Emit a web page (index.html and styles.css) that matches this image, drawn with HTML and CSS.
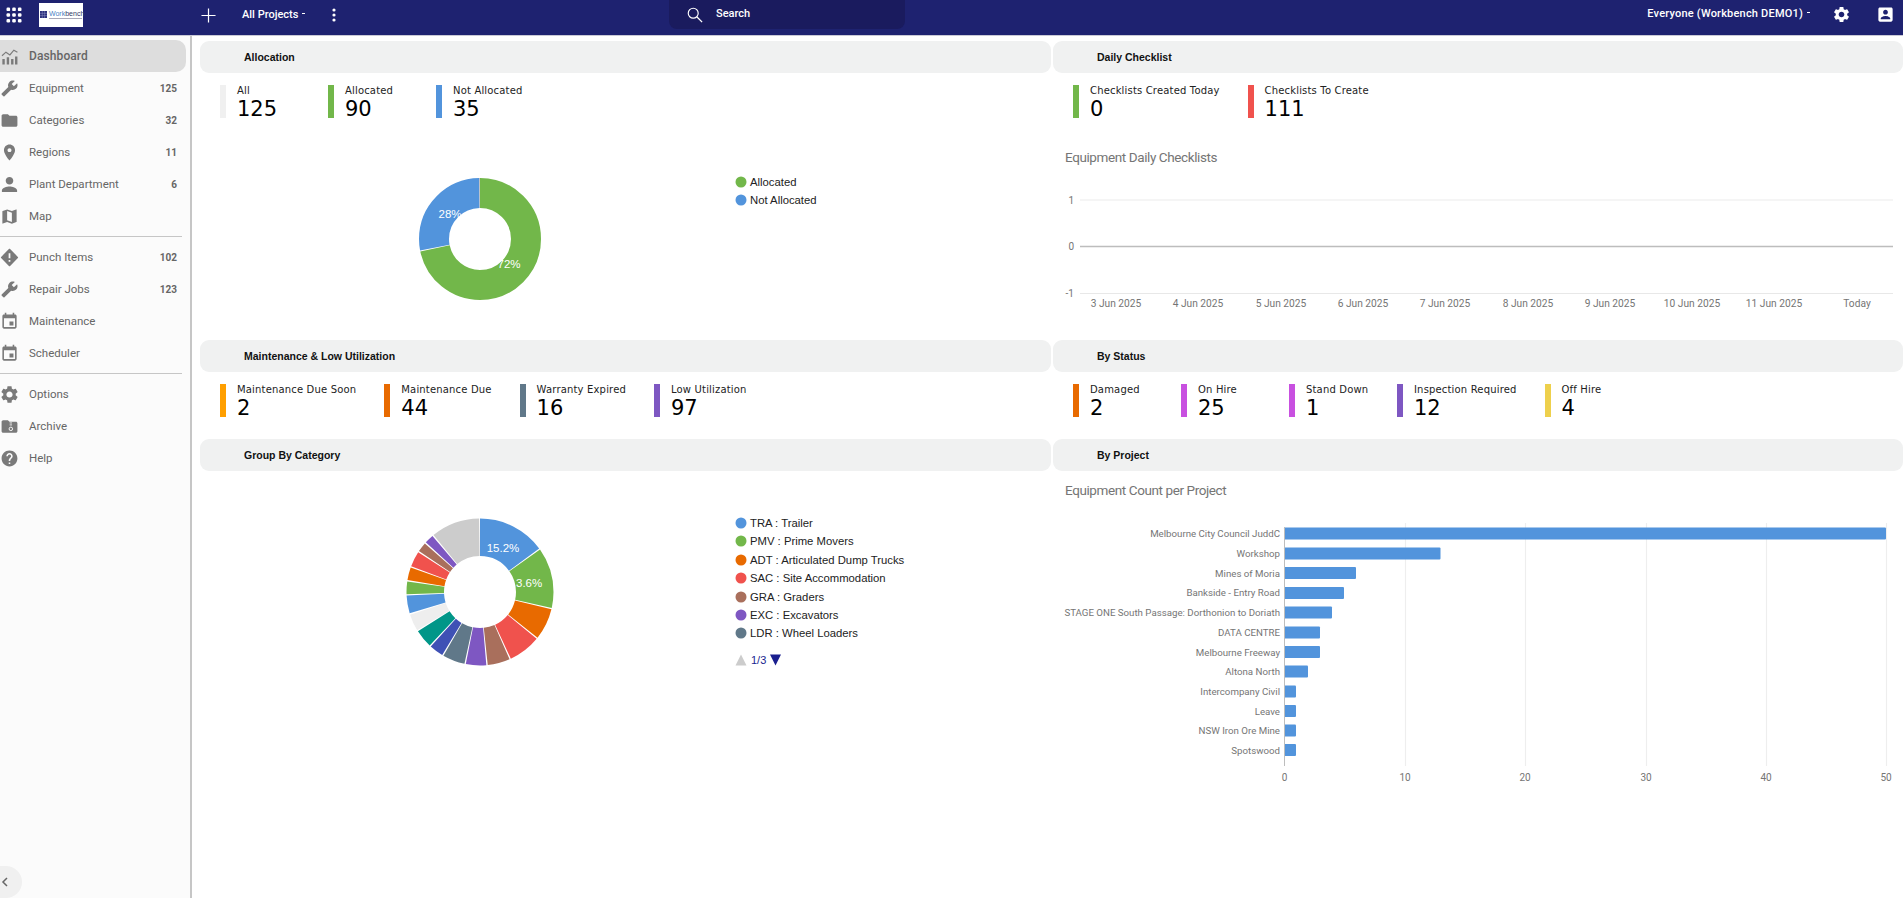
FILE: index.html
```html
<!DOCTYPE html>
<html lang="en">
<head>
<meta charset="utf-8">
<title>Workbench Dashboard</title>
<link rel="stylesheet" href="styles.css">
</head>
<body>
<header class="topbar">
  <div class="top-left">
    <svg class="apps" viewBox="0 0 16 16" fill="#fff"><rect x="0.5" y="0.5" width="3.6" height="3.6" rx="1.2"/><rect x="6.2" y="0.5" width="3.6" height="3.6" rx="1.2"/><rect x="11.9" y="0.5" width="3.6" height="3.6" rx="1.2"/><rect x="0.5" y="6.2" width="3.6" height="3.6" rx="1.2"/><rect x="6.2" y="6.2" width="3.6" height="3.6" rx="1.2"/><rect x="11.9" y="6.2" width="3.6" height="3.6" rx="1.2"/><rect x="0.5" y="11.9" width="3.6" height="3.6" rx="1.2"/><rect x="6.2" y="11.9" width="3.6" height="3.6" rx="1.2"/><rect x="11.9" y="11.9" width="3.6" height="3.6" rx="1.2"/></svg>
    <div class="logo">
      <svg class="logo-mark" viewBox="0 0 7 7"><rect width="7" height="7" fill="#2a2e7c"/><path d="M0 2.3h7M0 4.6h7M2.3 0v7M4.6 0v7" stroke="#8d90c4" stroke-width=".5"/></svg>
      <div class="logo-words"><span class="logo-name"><b>Work</b>bench</span><span class="logo-sub"></span></div>
    </div>
    <svg class="plus" viewBox="0 0 16 16"><path d="M8 0.5v15M0.5 8h15" stroke="#fff" stroke-width="1.3" fill="none"/></svg>
    <span class="top-label projects">All Projects<i class="caret"></i></span>
    <svg class="kebab" viewBox="0 0 4 14" fill="#fff"><circle cx="2" cy="2" r="1.6"/><circle cx="2" cy="7" r="1.6"/><circle cx="2" cy="12" r="1.6"/></svg>
  </div>
  <div class="searchbox">
    <svg class="search-icon" viewBox="0 0 18 18"><circle cx="7" cy="7" r="5.6" fill="none" stroke="#fff" stroke-width="1.3"/><path d="M11 11l6 6" stroke="#fff" stroke-width="1.5"/></svg>
    <span class="search-text">Search</span>
  </div>
  <div class="top-right">
    <span class="top-label org">Everyone (Workbench DEMO1)<i class="caret"></i></span>
    <svg class="top-icon gear" viewBox="0 0 24 24" fill="#fff"><path d="M19.14 12.94c.04-.3.06-.61.06-.94 0-.32-.02-.64-.07-.94l2.03-1.58c.18-.14.23-.41.12-.61l-1.92-3.32c-.12-.22-.37-.29-.59-.22l-2.39.96c-.5-.38-1.03-.7-1.62-.94l-.36-2.54c-.04-.24-.24-.41-.48-.41h-3.84c-.24 0-.43.17-.47.41l-.36 2.54c-.59.24-1.13.57-1.62.94l-2.39-.96c-.22-.08-.47 0-.59.22L2.74 8.87c-.12.21-.08.47.12.61l2.03 1.58c-.05.3-.09.63-.09.94s.02.64.07.94l-2.03 1.58c-.18.14-.23.41-.12.61l1.92 3.32c.12.22.37.29.59.22l2.39-.96c.5.38 1.03.7 1.62.94l.36 2.54c.05.24.24.41.48.41h3.84c.24 0 .44-.17.47-.41l.36-2.54c.59-.24 1.13-.56 1.62-.94l2.39.96c.22.08.47 0 .59-.22l1.92-3.32c.12-.22.07-.47-.12-.61l-2.01-1.58zM12 15.6c-1.98 0-3.6-1.62-3.6-3.6s1.62-3.6 3.6-3.6 3.6 1.62 3.6 3.6-1.62 3.6-3.6 3.6z"/></svg>
    <svg class="top-icon" viewBox="0 0 24 24" fill="#fff"><path d="M3 5v14c0 1.1.89 2 2 2h14c1.1 0 2-.9 2-2V5c0-1.1-.9-2-2-2H5c-1.11 0-2 .9-2 2zm12 4c0 1.66-1.34 3-3 3s-3-1.34-3-3 1.34-3 3-3 3 1.34 3 3zm-9 8c0-2 4-3.1 6-3.1s6 1.1 6 3.1v1H6v-1z"/></svg>
  </div>
</header>

<div class="shell">
  <aside class="sidebar">
    <nav class="nav-group">
      <a class="nav-item active"><svg class="nav-icon" viewBox="0 0 24 24"><path d="M3 15h3v7H3zM8.500 13h3v9h-3zM14 15h3v7h-3zM19 12h3v10h-3z"/><path d="M2.500 11l5-4.500 5 3.500 5-6 4.500 2.500" fill="none" stroke="#7a7a7a" stroke-width="1.500"/></svg><span class="nav-text">Dashboard</span></a>
      <a class="nav-item"><svg class="nav-icon" viewBox="-1 -1 26 26"><path transform="matrix(-1 0 0 1 24 0)" d="M22.7 19l-9.1-9.1c.9-2.3.4-5-1.5-6.9-2-2-5-2.4-7.4-1.3L9 6 6 9 1.6 4.7C.4 7.1.9 10.1 2.9 12.1c1.9 1.9 4.6 2.4 6.9 1.5l9.1 9.1c.4.4 1 .4 1.4 0l2.3-2.3c.5-.4.5-1.1.1-1.4z"/></svg><span class="nav-text">Equipment</span><span class="nav-count">125</span></a>
      <a class="nav-item"><svg class="nav-icon" viewBox="0 0 24 24"><path d="M10 4H4c-1.1 0-1.99.9-1.99 2L2 18c0 1.1.9 2 2 2h16c1.1 0 2-.9 2-2V8c0-1.1-.9-2-2-2h-8l-2-2z"/></svg><span class="nav-text">Categories</span><span class="nav-count">32</span></a>
      <a class="nav-item"><svg class="nav-icon" viewBox="0 0 24 24"><path d="M12 2C8.13 2 5 5.13 5 9c0 5.25 7 13 7 13s7-7.75 7-13c0-3.87-3.13-7-7-7zm0 9.500c-1.38 0-2.500-1.12-2.500-2.500s1.12-2.500 2.500-2.500 2.500 1.12 2.500 2.500-1.12 2.500-2.500 2.500z"/></svg><span class="nav-text">Regions</span><span class="nav-count">11</span></a>
      <a class="nav-item"><svg class="nav-icon" viewBox="2 2 20 20"><path d="M12 12c2.21 0 4-1.79 4-4s-1.79-4-4-4-4 1.79-4 4 1.79 4 4 4zm0 2c-2.67 0-8 1.34-8 4v2h16v-2c0-2.66-5.33-4-8-4z"/></svg><span class="nav-text">Plant Department</span><span class="nav-count">6</span></a>
      <a class="nav-item"><svg class="nav-icon" viewBox="0 0 24 24"><path d="M20.500 3l-.16.03L15 5.100 9 3 3.360 4.900c-.21.07-.36.25-.36.48V20.500c0 .28.22.5.5.5l.16-.03L9 18.900l6 2.100 5.640-1.900c.21-.07.36-.25.36-.48V3.500c0-.28-.22-.5-.5-.5zM15 19l-6-2.110V5l6 2.110V19z"/></svg><span class="nav-text">Map</span></a>
    </nav>
    <nav class="nav-group">
      <a class="nav-item"><svg class="nav-icon" viewBox="1 1 22 22"><path d="M21.71 11.29l-9-9c-.39-.39-1.02-.39-1.41 0l-9 9c-.39.39-.39 1.02 0 1.41l9 9c.39.39 1.02.39 1.41 0l9-9c.39-.38.39-1.01 0-1.41zM13 17h-2v-2h2v2zm0-4h-2V7h2v6z"/></svg><span class="nav-text">Punch Items</span><span class="nav-count">102</span></a>
      <a class="nav-item"><svg class="nav-icon" viewBox="-1 -1 26 26"><path transform="matrix(-1 0 0 1 24 0)" d="M22.7 19l-9.1-9.1c.9-2.3.4-5-1.5-6.9-2-2-5-2.4-7.4-1.3L9 6 6 9 1.6 4.7C.4 7.1.9 10.1 2.9 12.1c1.9 1.9 4.6 2.4 6.9 1.5l9.1 9.1c.4.4 1 .4 1.4 0l2.3-2.3c.5-.4.5-1.1.1-1.4z"/></svg><span class="nav-text">Repair Jobs</span><span class="nav-count">123</span></a>
      <a class="nav-item"><svg class="nav-icon" viewBox="0 0 24 24"><path d="M17 12h-5v5h5v-5zM16 1v2H8V1H6v2H5c-1.11 0-1.99.9-1.99 2L3 19c0 1.1.89 2 2 2h14c1.1 0 2-.9 2-2V5c0-1.1-.9-2-2-2h-1V1h-2zm3 18H5V8h14v11z"/></svg><span class="nav-text">Maintenance</span></a>
      <a class="nav-item"><svg class="nav-icon" viewBox="0 0 24 24"><path d="M17 12h-5v5h5v-5zM16 1v2H8V1H6v2H5c-1.11 0-1.99.9-1.99 2L3 19c0 1.1.89 2 2 2h14c1.1 0 2-.9 2-2V5c0-1.1-.9-2-2-2h-1V1h-2zm3 18H5V8h14v11z"/></svg><span class="nav-text">Scheduler</span></a>
    </nav>
    <nav class="nav-group last">
      <a class="nav-item"><svg class="nav-icon" viewBox="1 1 22 22"><path d="M19.14 12.94c.04-.3.06-.61.06-.94 0-.32-.02-.64-.07-.94l2.03-1.58c.18-.14.23-.41.12-.61l-1.92-3.32c-.12-.22-.37-.29-.59-.22l-2.39.96c-.5-.38-1.03-.7-1.62-.94l-.36-2.54c-.04-.24-.24-.41-.48-.41h-3.84c-.24 0-.43.17-.47.41l-.36 2.54c-.59.24-1.13.57-1.62.94l-2.39-.96c-.22-.08-.47 0-.59.22L2.74 8.87c-.12.21-.08.47.12.61l2.03 1.58c-.05.3-.09.63-.09.94s.02.64.07.94l-2.03 1.58c-.18.14-.23.41-.12.61l1.92 3.32c.12.22.37.29.59.22l2.39-.96c.5.38 1.03.7 1.62.94l.36 2.54c.05.24.24.41.48.41h3.84c.24 0 .44-.17.47-.41l.36-2.54c.59-.24 1.13-.56 1.62-.94l2.39.96c.22.08.47 0 .59-.22l1.92-3.32c.12-.22.07-.47-.12-.61l-2.01-1.58zM12 15.6c-1.98 0-3.6-1.62-3.6-3.6s1.62-3.6 3.6-3.6 3.6 1.62 3.6 3.6-1.62 3.6-3.6 3.6z"/></svg><span class="nav-text">Options</span></a>
      <a class="nav-item"><svg class="nav-icon" viewBox="0 0 24 24"><path d="M10 4H4c-1.1 0-1.99.9-1.99 2L2 18c0 1.1.9 2 2 2h16c1.1 0 2-.9 2-2V8c0-1.1-.9-2-2-2h-8l-2-2z"/><path d="M12.200 7.500h3M12.200 10h3" stroke="#fbfbfb" stroke-width="1.100"/><circle cx="13.700" cy="15" r="2.200" fill="none" stroke="#fbfbfb" stroke-width="1.200"/></svg><span class="nav-text">Archive</span></a>
      <a class="nav-item"><svg class="nav-icon" viewBox="0 0 24 24"><path d="M12 2C6.48 2 2 6.48 2 12s4.48 10 10 10 10-4.48 10-10S17.52 2 12 2zm1 17h-2v-2h2v2zm2.07-7.750l-.9.92C13.45 12.900 13 13.500 13 15h-2v-.5c0-1.100.45-2.100 1.170-2.830l1.240-1.260c.37-.36.59-.86.59-1.410 0-1.100-.9-2-2-2s-2 .9-2 2H8c0-2.210 1.790-4 4-4s4 1.790 4 4c0 .88-.36 1.680-.93 2.250z"/></svg><span class="nav-text">Help</span></a>
    </nav>
    <button class="collapse" aria-label="Collapse"><svg viewBox="0 0 8 12"><path d="M6 2L2 6l4 4" fill="none" stroke="#666" stroke-width="1.500"/></svg></button>
  </aside>

  <main class="board">
    <section class="panel">
      <h2 class="panel-head">Allocation</h2>
      <div class="stats">
        <div class="stat"><i class="bar c-light"></i><div><div class="stat-label">All</div><div class="stat-value">125</div></div></div>
        <div class="stat"><i class="bar c-green"></i><div><div class="stat-label">Allocated</div><div class="stat-value">90</div></div></div>
        <div class="stat"><i class="bar c-blue"></i><div><div class="stat-label">Not Allocated</div><div class="stat-value">35</div></div></div>
      </div>
      <svg class="chart chart-top" viewBox="200 118 851 222">
        <g transform="rotate(-90 480 239)" fill="none" stroke-width="30">
          <circle cx="480" cy="239" r="46" pathLength="100" stroke="#72b74a" stroke-dasharray="71.7 100"/>
          <circle cx="480" cy="239" r="46" pathLength="100" stroke="#5294dc" stroke-dasharray="27.8 100" stroke-dashoffset="-72"/>
          <circle cx="480" cy="239" r="46" pathLength="100" stroke="#bdbdbd" stroke-dasharray="0.25 100" stroke-dashoffset="-99.75"/>
        </g>
        <text class="slice-text" x="450" y="218" text-anchor="middle">28%</text>
        <text class="slice-text" x="509" y="268" text-anchor="middle">72%</text>
        <circle cx="741" cy="182" r="5.500" fill="#72b74a"/><text class="legend" x="750" y="186">Allocated</text>
        <circle cx="741" cy="200" r="5.500" fill="#5294dc"/><text class="legend" x="750" y="204">Not Allocated</text>
      </svg>
    </section>

    <section class="panel">
      <h2 class="panel-head">Daily Checklist</h2>
      <div class="stats">
        <div class="stat"><i class="bar c-green"></i><div><div class="stat-label">Checklists Created Today</div><div class="stat-value">0</div></div></div>
        <div class="stat"><i class="bar c-red"></i><div><div class="stat-label">Checklists To Create</div><div class="stat-value">111</div></div></div>
      </div>
      <svg class="chart chart-top" viewBox="1053 118 850 222">
        <text class="chart-title" x="1065" y="162">Equipment Daily Checklists</text>
        <path d="M1080 200H1893" stroke="#f2f2f2" stroke-width="1.500"/>
        <path d="M1080 246.500H1893" stroke="#bdbdbd" stroke-width="1.500"/>
        <path d="M1080 293.500H1893" stroke="#e8e8e8"/>
        <text class="axis" x="1074" y="204" text-anchor="end">1</text>
        <text class="axis" x="1074" y="250" text-anchor="end">0</text>
        <text class="axis" x="1074" y="297" text-anchor="end">-1</text>
        <g text-anchor="middle">
          <text class="axis date" x="1116" y="307">3 Jun 2025</text>
          <text class="axis date" x="1198" y="307">4 Jun 2025</text>
          <text class="axis date" x="1281" y="307">5 Jun 2025</text>
          <text class="axis date" x="1363" y="307">6 Jun 2025</text>
          <text class="axis date" x="1445" y="307">7 Jun 2025</text>
          <text class="axis date" x="1528" y="307">8 Jun 2025</text>
          <text class="axis date" x="1610" y="307">9 Jun 2025</text>
          <text class="axis date" x="1692" y="307">10 Jun 2025</text>
          <text class="axis date" x="1774" y="307">11 Jun 2025</text>
          <text class="axis date" x="1857" y="307">Today</text>
        </g>
      </svg>
    </section>

    <section class="panel">
      <h2 class="panel-head">Maintenance &amp; Low Utilization</h2>
      <div class="stats">
        <div class="stat"><i class="bar c-amber"></i><div><div class="stat-label">Maintenance Due Soon</div><div class="stat-value">2</div></div></div>
        <div class="stat"><i class="bar c-orange"></i><div><div class="stat-label">Maintenance Due</div><div class="stat-value">44</div></div></div>
        <div class="stat"><i class="bar c-slate"></i><div><div class="stat-label">Warranty Expired</div><div class="stat-value">16</div></div></div>
        <div class="stat"><i class="bar c-purple"></i><div><div class="stat-label">Low Utilization</div><div class="stat-value">97</div></div></div>
      </div>
    </section>

    <section class="panel">
      <h2 class="panel-head">By Status</h2>
      <div class="stats">
        <div class="stat"><i class="bar c-orange"></i><div><div class="stat-label">Damaged</div><div class="stat-value">2</div></div></div>
        <div class="stat"><i class="bar c-magenta"></i><div><div class="stat-label">On Hire</div><div class="stat-value">25</div></div></div>
        <div class="stat"><i class="bar c-magenta"></i><div><div class="stat-label">Stand Down</div><div class="stat-value">1</div></div></div>
        <div class="stat"><i class="bar c-purple"></i><div><div class="stat-label">Inspection Required</div><div class="stat-value">12</div></div></div>
        <div class="stat"><i class="bar c-yellow"></i><div><div class="stat-label">Off Hire</div><div class="stat-value">4</div></div></div>
      </div>
    </section>

    <section class="panel">
      <h2 class="panel-head">Group By Category</h2>
      <svg class="chart chart-bottom" viewBox="200 471 851 320">
        <g transform="rotate(-90 480 592)" fill="none" stroke-width="37.500">
          <circle cx="480" cy="592" r="54.750" pathLength="100" stroke="#5294dc" stroke-dasharray="14.9 100"/>
          <circle cx="480" cy="592" r="54.750" pathLength="100" stroke="#72b74a" stroke-dasharray="13.3 100" stroke-dashoffset="-15.2"/>
          <circle cx="480" cy="592" r="54.750" pathLength="100" stroke="#e86a00" stroke-dasharray="6.9 100" stroke-dashoffset="-28.8"/>
          <circle cx="480" cy="592" r="54.750" pathLength="100" stroke="#f0524d" stroke-dasharray="7.1 100" stroke-dashoffset="-36"/>
          <circle cx="480" cy="592" r="54.750" pathLength="100" stroke="#a96f5c" stroke-dasharray="4.9 100" stroke-dashoffset="-43.4"/>
          <circle cx="480" cy="592" r="54.750" pathLength="100" stroke="#7e57c2" stroke-dasharray="4.5 100" stroke-dashoffset="-48.6"/>
          <circle cx="480" cy="592" r="54.750" pathLength="100" stroke="#607889" stroke-dasharray="4.9 100" stroke-dashoffset="-53.4"/>
          <circle cx="480" cy="592" r="54.750" pathLength="100" stroke="#3f51b5" stroke-dasharray="3.1 100" stroke-dashoffset="-58.6"/>
          <circle cx="480" cy="592" r="54.750" pathLength="100" stroke="#009688" stroke-dasharray="4 100" stroke-dashoffset="-62"/>
          <circle cx="480" cy="592" r="54.750" pathLength="100" stroke="#eeeeee" stroke-dasharray="3.7 100" stroke-dashoffset="-66.3"/>
          <circle cx="480" cy="592" r="54.750" pathLength="100" stroke="#5294dc" stroke-dasharray="3.9 100" stroke-dashoffset="-70.3"/>
          <circle cx="480" cy="592" r="54.750" pathLength="100" stroke="#72b74a" stroke-dasharray="2.8 100" stroke-dashoffset="-74.5"/>
          <circle cx="480" cy="592" r="54.750" pathLength="100" stroke="#e86a00" stroke-dasharray="2.8 100" stroke-dashoffset="-77.6"/>
          <circle cx="480" cy="592" r="54.750" pathLength="100" stroke="#f0524d" stroke-dasharray="3.4 100" stroke-dashoffset="-80.7"/>
          <circle cx="480" cy="592" r="54.750" pathLength="100" stroke="#a96f5c" stroke-dasharray="2.1 100" stroke-dashoffset="-84.4"/>
          <circle cx="480" cy="592" r="54.750" pathLength="100" stroke="#7e57c2" stroke-dasharray="2 100" stroke-dashoffset="-86.8"/>
          <circle cx="480" cy="592" r="54.750" pathLength="100" stroke="#cccccc" stroke-dasharray="10.7 100" stroke-dashoffset="-89.1"/>
        </g>
        <text class="slice-text" x="503" y="552" text-anchor="middle">15.2%</text>
        <text class="slice-text" x="516" y="587">3.6%</text>
        <circle cx="741" cy="523" r="5.500" fill="#5294dc"/><text class="legend" x="750" y="527">TRA : Trailer</text>
        <circle cx="741" cy="541" r="5.500" fill="#72b74a"/><text class="legend" x="750" y="545">PMV : Prime Movers</text>
        <circle cx="741" cy="560" r="5.500" fill="#e86a00"/><text class="legend" x="750" y="564">ADT : Articulated Dump Trucks</text>
        <circle cx="741" cy="578" r="5.500" fill="#f0524d"/><text class="legend" x="750" y="582">SAC : Site Accommodation</text>
        <circle cx="741" cy="597" r="5.500" fill="#a96f5c"/><text class="legend" x="750" y="601">GRA : Graders</text>
        <circle cx="741" cy="615" r="5.500" fill="#7e57c2"/><text class="legend" x="750" y="619">EXC : Excavators</text>
        <circle cx="741" cy="633" r="5.500" fill="#607889"/><text class="legend" x="750" y="637">LDR : Wheel Loaders</text>
        <path d="M735.500 665.500h11l-5.500-11z" fill="#ccc"/>
        <text class="pager" x="751" y="664">1/3</text>
        <path d="M770 654.500h11l-5.500 11z" fill="#1a1f8f"/>
      </svg>
    </section>

    <section class="panel">
      <h2 class="panel-head">By Project</h2>
      <svg class="chart chart-bottom" viewBox="1053 471 850 320">
        <text class="chart-title" x="1065" y="495">Equipment Count per Project</text>
        <path d="M1405.500 523V766M1525.500 523V766M1646.500 523V766M1766.500 523V766M1886.500 523V766" stroke="#eeeeee" stroke-width="1.200"/>
        <g fill="#5294dc">
          <rect x="1284" y="527.500" width="602" height="12" rx="1"/>
          <rect x="1284" y="547.500" width="156.500" height="12" rx="1"/>
          <rect x="1284" y="567" width="72" height="12" rx="1"/>
          <rect x="1284" y="587" width="60" height="12" rx="1"/>
          <rect x="1284" y="606.500" width="48" height="12" rx="1"/>
          <rect x="1284" y="626.500" width="36" height="12" rx="1"/>
          <rect x="1284" y="646" width="36" height="12" rx="1"/>
          <rect x="1284" y="665.500" width="24" height="12" rx="1"/>
          <rect x="1284" y="685.500" width="12" height="12" rx="1"/>
          <rect x="1284" y="705" width="12" height="12" rx="1"/>
          <rect x="1284" y="724.500" width="12" height="12" rx="1"/>
          <rect x="1284" y="744" width="12" height="12" rx="1"/>
        </g>
        <path d="M1284.500 527V766" stroke="#bdbdbd" stroke-width="1"/>
        <g text-anchor="end">
          <text class="axis project" x="1280" y="537">Melbourne City Council JuddC</text>
          <text class="axis project" x="1280" y="557">Workshop</text>
          <text class="axis project" x="1280" y="577">Mines of Moria</text>
          <text class="axis project" x="1280" y="596">Bankside - Entry Road</text>
          <text class="axis project" x="1280" y="616">STAGE ONE South Passage: Dorthonion to Doriath</text>
          <text class="axis project" x="1280" y="636">DATA CENTRE</text>
          <text class="axis project" x="1280" y="656">Melbourne Freeway</text>
          <text class="axis project" x="1280" y="675">Altona North</text>
          <text class="axis project" x="1280" y="695">Intercompany Civil</text>
          <text class="axis project" x="1280" y="715">Leave</text>
          <text class="axis project" x="1280" y="734">NSW Iron Ore Mine</text>
          <text class="axis project" x="1280" y="754">Spotswood</text>
        </g>
        <g text-anchor="middle">
          <text class="axis" x="1284.500" y="781">0</text>
          <text class="axis" x="1405" y="781">10</text>
          <text class="axis" x="1525" y="781">20</text>
          <text class="axis" x="1646" y="781">30</text>
          <text class="axis" x="1766" y="781">40</text>
          <text class="axis" x="1886" y="781">50</text>
        </g>
      </svg>
    </section>
  </main>
</div>
</body>
</html>
```

FILE: styles.css
```css
* { box-sizing: border-box; }
html, body { margin: 0; height: 100%; overflow: hidden; background: #fff; }
body { font-family: "Liberation Sans", Arial, sans-serif; }

.topbar {
  height: 36px;
  background: #1e2270;
  border-bottom: 1px solid #c9c9d6;
  display: flex;
  align-items: flex-start;
  color: #fff;
}
.top-left { display: flex; align-items: center; height: 29px; flex: 0 0 669px; }
.apps { width: 16px; height: 16px; margin-left: 6px; }
.logo {
  width: 44px; height: 24px; margin-left: 17px; background: #fff;
  display: flex; align-items: center; gap: 2px; padding-left: 1px;
}
.logo-mark { width: 7px; height: 7px; flex: none; }
.logo-words { display: flex; flex-direction: column; align-items: flex-start; gap: 1px; }
.logo-name { font-size: 7px; line-height: 7px; color: #333a66; white-space: nowrap; }
.logo-name b { color: #4a7fc4; font-weight: 400; }
.logo-sub { width: 33px; height: 1px; background: #a8a8b8; }
.plus { width: 15px; height: 15px; margin-left: 118px; margin-top: 1px; }
.top-label { font: 500 11px "Roboto", sans-serif; white-space: nowrap; }
.projects { margin-left: 26px; }
.caret { display: inline-block; width: 3px; height: 1px; background: #fff; margin-left: 4px; vertical-align: 4px; }
.kebab { width: 4px; height: 14px; margin-left: 27px; }
.searchbox {
  width: 236px; height: 29px; background: #1a1b5e; border-radius: 0 0 8px 8px;
  display: flex; align-items: center; padding-left: 18px; flex: none;
}
.search-icon { width: 16px; height: 16px; margin-top: 1px; }
.search-text { margin: -2px 0 0 13px; font: 500 11px "Roboto", sans-serif; }
.top-right { margin-left: auto; display: flex; align-items: center; height: 29px; padding-right: 8px; }
.org { margin: -2px 22px 0 0; letter-spacing: .2px; }
.top-icon { width: 19px; height: 19px; }
.gear { margin-right: 25px; }

.shell { display: flex; height: 862px; }
.sidebar {
  width: 192px; flex: none; background: #fbfbfb; border-right: 2px solid #c6c6c6;
  position: relative; padding-top: 4px;
}
.nav-group { border-bottom: 1px solid #c6c6c6; margin: 0 8px 4px 0; padding-bottom: 4px; }
.nav-group.last { border-bottom: 0; }
.nav-item {
  height: 32px; display: flex; align-items: center; color: #666;
  font: 400 11.500px "Roboto", sans-serif; padding-right: 5px;
  border-radius: 0 10px 10px 0;
}
.nav-item.active { background: #dddddd; font: 500 12px "Roboto", sans-serif; letter-spacing: .1px; margin-right: -4px; }
.nav-icon { width: 19px; height: 19px; fill: #7a7a7a; flex: none; margin-right: 10px; }
.nav-text { flex: 1; }
.nav-count { font: 700 10px "Roboto", sans-serif; }
.collapse {
  position: absolute; left: 0; bottom: 0; width: 22px; height: 32px;
  border: 0; background: #f0f0f0; border-radius: 0 16px 16px 0;
  display: flex; align-items: center; padding: 0 0 0 1px;
}
.collapse svg { width: 8px; height: 12px; }

.board {
  flex: 1; display: grid; grid-template-columns: 851px 850px; column-gap: 2px;
  grid-template-rows: 299px 99px 1fr; padding: 5px 0 0 8px;
}
.panel-head {
  height: 32px; margin: 0; background: #f0f1f1; border-radius: 9px;
  font: 700 10.500px/32px "Liberation Sans", sans-serif; color: #111; padding-left: 44px;
}
.stats { display: flex; margin-top: 12px; padding-left: 20px; height: 33px; }
.stat { display: flex; margin-right: 28px; min-width: 80px; }
.bar { width: 6px; height: 33px; margin-right: 11px; flex: none; }
.stat-label { font: 10px/11px "DejaVu Sans", sans-serif; color: #222; letter-spacing: .17px; white-space: nowrap; }
.stat-value { font: 21px/22px "DejaVu Sans", sans-serif; color: #000; margin-top: 2px; }
.c-light { background: #f0f0f0; }
.c-green { background: #72b74a; }
.c-blue { background: #5294dc; }
.c-red { background: #f0524d; }
.c-amber { background: #ff9f00; }
.c-orange { background: #e86a00; }
.c-slate { background: #607889; }
.c-purple { background: #7e57c2; }
.c-magenta { background: #c850e0; }
.c-yellow { background: #eed04c; }

.chart { display: block; width: 100%; }
.chart-top { height: 222px; }
.chart-bottom { height: 320px; }
.slice-text { font: 11.500px "Liberation Sans", sans-serif; fill: #fff; }
.legend { font: 11.300px "Liberation Sans", sans-serif; fill: #222; }
.pager { font: 11px "Liberation Sans", sans-serif; fill: #1a1f8f; }
.chart-title { font: 13.500px "Roboto", sans-serif; fill: #757575; letter-spacing: -.4px; }
.axis { font: 10px "Roboto", sans-serif; fill: #757575; }
.axis.date { font-size: 10.200px; }
.axis.project { font-size: 9.700px; }
```
